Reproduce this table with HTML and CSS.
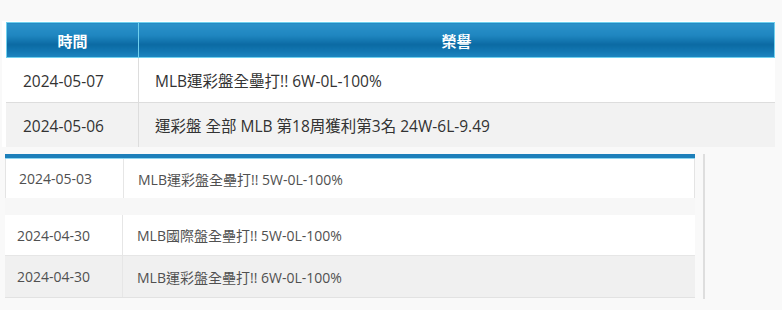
FILE: index.html
```html
<!DOCTYPE html>
<html lang="zh-Hant">
<head>
<meta charset="utf-8">
<link rel="stylesheet" href="styles.css">
</head>
<body>
<div class="page">
  <div class="card">
    <table class="honors">
      <colgroup><col class="c-date"><col></colgroup>
      <thead>
        <tr><th>時間</th><th>榮譽</th></tr>
      </thead>
      <tbody>
        <tr><td>2024-05-07</td><td>MLB運彩盤全壘打!! 6W-0L-100%</td></tr>
        <tr class="alt"><td>2024-05-06</td><td>運彩盤 全部 MLB 第18周獲利第3名 24W-6L-9.49</td></tr>
      </tbody>
    </table>
  </div>
  <div class="shot">
    <div class="shot-body">
      <div class="shot-bar"></div>
      <div class="srow first"><div class="sdate">2024-05-03</div><div class="stext">MLB運彩盤全壘打!! 5W-0L-100%</div></div>
      <div class="sgap"></div>
      <div class="srow"><div class="sdate">2024-04-30</div><div class="stext">MLB國際盤全壘打!! 5W-0L-100%</div></div>
      <div class="srow alt"><div class="sdate">2024-04-30</div><div class="stext">MLB運彩盤全壘打!! 6W-0L-100%</div></div>
    </div>
    <div class="shot-rule"></div>
  </div>
</div>
</body>
</html>
```

FILE: styles.css
```css
html, body {
  margin: 0;
  padding: 0;
  background: #f9f9f9;
}
body {
  width: 782px;
  height: 310px;
  overflow: hidden;
  font-family: "Open Sans", "Noto Sans CJK TC", sans-serif;
}
.page {
  padding-top: 21px;
}
.card {
  margin-left: 2px;
  width: 773px;
  padding: 1px 0 0 4px;
  box-sizing: border-box;
  background: #ffffff;
}
.honors {
  width: 769px;
  border-collapse: collapse;
  table-layout: fixed;
}
.c-date {
  width: 132px;
}
.honors th {
  height: 34px;
  padding: 0;
  color: #ffffff;
  font-weight: bold;
  font-size: 15px;
  text-align: center;
  border: 1px solid #6fd0ee;
  background: linear-gradient(to bottom, #2c92ca 0%, #1f86c0 35%, #0b6aa3 62%, #1479b4 85%, #1e86c1 100%);
}
.honors td {
  height: 43px;
  padding: 1px 0 0 16px;
  font-size: 15.5px;
  color: #333333;
  border-right: 1px solid #dddddd;
  border-bottom: 1px solid #dddddd;
  white-space: nowrap;
}
.honors td:last-child {
  border-right: none;
}
.honors td:first-child {
  border-left: 1px solid #ffffff;
}
.honors tr.alt td {
  background: #f2f2f2;
  border-bottom: none;
}
.honors tr.alt td:first-child {
  border-left-color: #f2f2f2;
}

.shot {
  display: flex;
  margin-top: 7px;
  padding-left: 5px;
  height: 145px;
}
.shot-body {
  width: 690px;
  display: flex;
  flex-direction: column;
}
.shot-bar {
  height: 4px;
  background: #1d7fba;
  border-bottom: 1px solid #8fd6f0;
}
.srow {
  display: grid;
  grid-template-columns: 118px 1fr;
  height: 40px;
  align-items: center;
  background: #ffffff;
  font-size: 14px;
  color: #505050;
}
.srow.first {
  height: 39px;
  border-left: 1px solid #e4e4e4;
  border-right: 1px solid #e4e4e4;
}
.srow.alt {
  height: 41px;
  background: #f0f0f0;
  border-top: 1px solid #e6e6e6;
  border-bottom: 1px solid #e2e2e2;
}
.sdate {
  padding-left: 12px;
  height: 100%;
  display: flex;
  align-items: center;
  border-right: 1px solid #e6e6e6;
}
.srow.first .sdate {
  padding-left: 13px;
}
.stext {
  padding-left: 14px;
}
.sgap {
  height: 17px;
  background: #f7f7f7;
}
.shot-rule {
  margin-left: 8px;
  width: 2px;
  height: 145px;
  background: #dedede;
}
```
